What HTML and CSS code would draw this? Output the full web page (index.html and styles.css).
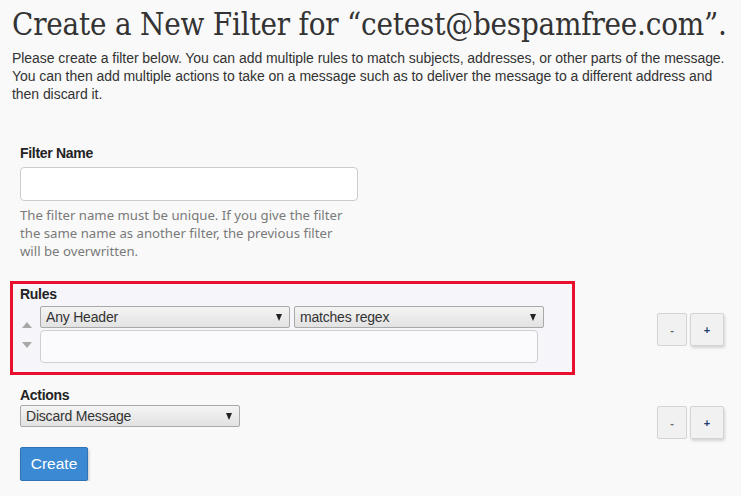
FILE: index.html
```html
<!DOCTYPE html>
<html>
<head>
<meta charset="utf-8">
<link rel="stylesheet" href="styles.css">
</head>
<body>
<div class="page">
  <h1 class="title">Create a New Filter for “cetest@bespamfree.com”.</h1>
  <p class="intro">Please create a filter below. You can add multiple rules to match subjects, addresses, or other parts of the message. You can then add multiple actions to take on a message such as to deliver the message to a different address and then discard it.</p>

  <form class="form">
    <div class="section name-section">
      <label class="label">Filter Name</label>
      <input class="text-input" type="text">
      <p class="help">The filter name must be unique. If you give the filter the same name as another filter, the previous filter will be overwritten.</p>
    </div>

    <div class="row rules-row">
      <div class="rules-box">
        <div class="label">Rules</div>
        <div class="rule">
          <div class="movers">
            <svg width="10" height="6" viewBox="0 0 10 6"><path d="M0 6 L5 0 L10 6 Z" fill="#a8a8a8"/></svg>
            <svg width="10" height="6" viewBox="0 0 10 6"><path d="M0 0 L5 6 L10 0 Z" fill="#a8a8a8"/></svg>
          </div>
          <div class="rule-fields">
            <div class="selects">
              <div class="select sel-header">Any Header<span class="caret"></span></div>
              <div class="select sel-match">matches regex<span class="caret"></span></div>
            </div>
            <div class="textarea"></div>
          </div>
        </div>
      </div>
      <div class="pm pm-rules">
        <button type="button" class="btn-minus">-</button>
        <button type="button" class="btn-plus">+</button>
      </div>
    </div>

    <div class="row actions-row">
      <div class="actions-box">
        <div class="label">Actions</div>
        <div class="select sel-action">Discard Message<span class="caret"></span></div>
      </div>
      <div class="pm pm-actions">
        <button type="button" class="btn-minus">-</button>
        <button type="button" class="btn-plus">+</button>
      </div>
    </div>

    <div class="section submit">
      <button type="button" class="btn-create">Create</button>
    </div>
  </form>
</div>
</body>
</html>
```

FILE: styles.css
```css
html, body {
  margin: 0;
  padding: 0;
  background: #f9f9f9;
}
body {
  font-family: "Liberation Sans", Arial, sans-serif;
  color: #333;
}
.page {
  padding: 0 0 0 12px;
}
.title {
  font-family: "DejaVu Serif Condensed", "DejaVu Serif", serif;
  font-stretch: condensed;
  font-weight: 300;
  font-size: 31px;
  color: #333;
  margin: 0;
  padding-top: 6px;
  line-height: 36px;
  letter-spacing: -0.2px;
  white-space: nowrap;
}
.intro {
  margin: 7px 0 0 0;
  font-size: 14px;
  line-height: 18px;
  letter-spacing: -0.05px;
  color: #333;
  width: 722px;
}
.form {
  margin-top: 41px;
}
.section {
  padding-left: 8px;
}
.label {
  display: block;
  font-weight: bold;
  font-size: 14px;
  line-height: 18px;
  color: #222;
  letter-spacing: -0.3px;
}
.name-section .label {
  margin-bottom: 5px;
}
.text-input {
  display: block;
  box-sizing: border-box;
  width: 338px;
  height: 34px;
  margin: 0;
  border: 1px solid #ccc;
  border-radius: 4px;
  background: #fff;
}
.help {
  margin: 5px 0 0 0;
  width: 330px;
  font-family: "Noto Sans", sans-serif;
  font-size: 13.2px;
  line-height: 18px;
  color: #7a7a7a;
}
.row {
  display: flex;
  align-items: flex-start;
}
.rules-row {
  margin-top: 21px;
}
.rules-box {
  box-sizing: border-box;
  width: 565px;
  margin-left: -2px;
  border: 3px solid #e8102c;
  background: #f6f6fa;
  padding: 1px 0 8px 7px;
  height: 94px;
}
.rule {
  display: flex;
  margin-top: 3px;
}
.movers {
  width: 18px;
  display: flex;
  flex-direction: column;
  align-items: flex-start;
  padding-left: 2px;
  padding-top: 16px;
  gap: 14px;
}
.movers svg {
  display: block;
}
.rule-fields {
  display: flex;
  flex-direction: column;
}
.selects {
  display: flex;
  gap: 4px;
}
.select {
  position: relative;
  box-sizing: border-box;
  height: 22px;
  border: 1px solid #a9a9a9;
  border-radius: 2px;
  background: linear-gradient(#f4f4f4, #e2e2e2);
  font-size: 14px;
  line-height: 20px;
  padding-left: 5px;
  color: #333;
  letter-spacing: -0.2px;
}
.caret {
  position: absolute;
  right: 7px;
  top: 7px;
  width: 0;
  height: 0;
  border-left: 3.5px solid transparent;
  border-right: 3.5px solid transparent;
  border-top: 7px solid #222;
}
.sel-header { width: 250px; }
.sel-match { width: 250px; }
.textarea {
  box-sizing: border-box;
  width: 498px;
  height: 33px;
  margin-top: 2px;
  border: 1px solid #cfcfcf;
  border-radius: 4px;
  background: #fbfbfe;
}
.pm {
  margin-left: auto;
  margin-right: 17px;
  display: flex;
  gap: 3px;
}
.pm-rules {
  margin-top: 32px;
}
.btn-minus, .btn-plus {
  box-sizing: border-box;
  height: 33px;
  margin: 0;
  padding: 0;
  border: 1px solid #d4d4d4;
  border-radius: 2px;
  background: #f1f1f1;
  font-family: "Liberation Sans", sans-serif;
  font-size: 11px;
  font-weight: bold;
  cursor: pointer;
}
.btn-minus {
  width: 30px;
  color: #666;
}
.btn-plus {
  width: 34px;
  color: #1f3d6e;
  box-shadow: 1px 2px 3px rgba(0,0,0,0.15);
}
.actions-row {
  margin-top: 11px;
}
.actions-box {
  padding-left: 8px;
}
.sel-action {
  width: 220px;
  margin-top: 1px;
}
.pm-actions {
  margin-top: 20px;
}
.submit {
  margin-top: 8px;
}
.btn-create {
  box-sizing: border-box;
  width: 68px;
  height: 34px;
  border: 1px solid #2f73b3;
  border-radius: 2px;
  background: #3a89d2;
  color: #fff;
  font-family: "Liberation Sans", sans-serif;
  font-size: 15.5px;
  padding: 0;
  box-shadow: 1px 2px 3px rgba(0,0,0,0.2);
}
```
